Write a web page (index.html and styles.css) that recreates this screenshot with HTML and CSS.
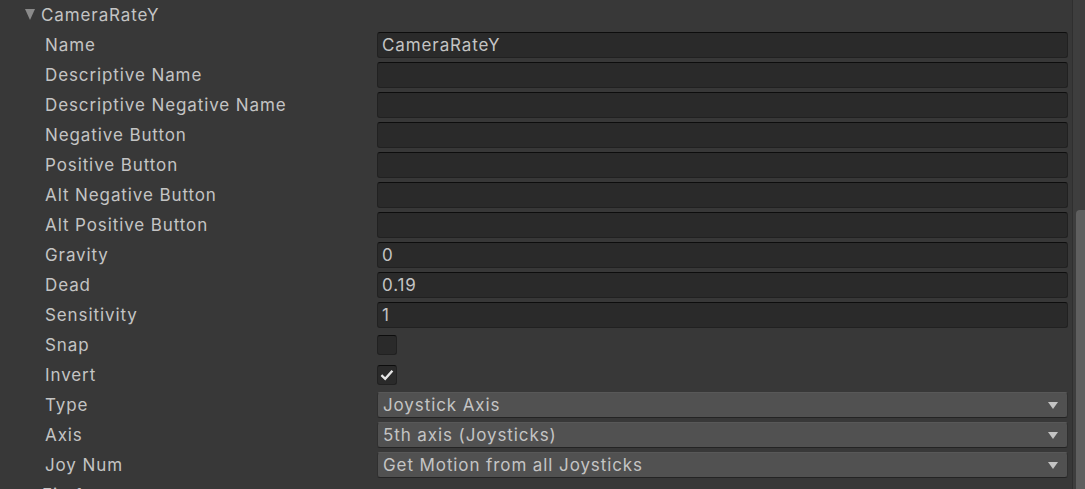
FILE: index.html
```html
<!DOCTYPE html>
<html>
<head>
<meta charset="utf-8">
<link rel="stylesheet" href="styles.css">
</head>
<body>
<div class="panel">
  <div class="content">
    <div class="header"><span class="tri-down"></span><span class="title">CameraRateY</span></div>
    <div class="row"><div class="label">Name</div><div class="field text">CameraRateY</div></div>
    <div class="row"><div class="label">Descriptive Name</div><div class="field text"></div></div>
    <div class="row"><div class="label">Descriptive Negative Name</div><div class="field text"></div></div>
    <div class="row"><div class="label">Negative Button</div><div class="field text"></div></div>
    <div class="row"><div class="label">Positive Button</div><div class="field text"></div></div>
    <div class="row"><div class="label">Alt Negative Button</div><div class="field text"></div></div>
    <div class="row"><div class="label">Alt Positive Button</div><div class="field text"></div></div>
    <div class="row"><div class="label">Gravity</div><div class="field text">0</div></div>
    <div class="row"><div class="label">Dead</div><div class="field text">0.19</div></div>
    <div class="row"><div class="label">Sensitivity</div><div class="field text">1</div></div>
    <div class="row"><div class="label">Snap</div><div class="check"></div></div>
    <div class="row"><div class="label">Invert</div><div class="check"><svg width="16" height="16" viewBox="0 0 16 16"><path d="M2.4 8.2 L6.2 11.8 L13.4 3.8" fill="none" stroke="#e6e6e6" stroke-width="2.4"/></svg></div></div>
    <div class="row"><div class="label">Type</div><div class="field drop"><span>Joystick Axis</span><span class="arrow"></span></div></div>
    <div class="row"><div class="label">Axis</div><div class="field drop"><span>5th axis (Joysticks)</span><span class="arrow"></span></div></div>
    <div class="row"><div class="label">Joy Num</div><div class="field drop"><span>Get Motion from all Joysticks</span><span class="arrow"></span></div></div>
    <div class="header next"><span class="tri-right"></span><span class="title">Fire1</span></div>
  </div>
  <div class="scroll"><div class="thumb"></div></div>
</div>
</body>
</html>
```
FILE: styles.css
```css
html, body {
  margin: 0;
  padding: 0;
  background: #383838;
  overflow: hidden;
}
.panel {
  display: flex;
  width: 1085px;
  height: 489px;
  overflow: hidden;
  font-family: Inter, "Noto Sans", sans-serif;
  font-size: 17px;
  letter-spacing: 0.9px;
  color: #c4c4c4;
}
.content {
  flex: 1;
  padding-right: 4px;
}
.header {
  height: 30px;
  display: flex;
  align-items: center;
  padding-left: 25px;
}
.tri-down {
  width: 0;
  height: 0;
  border-left: 5.5px solid transparent;
  border-right: 5.5px solid transparent;
  border-top: 11px solid #8a8a8a;
  margin-right: 6px;
  margin-top: -1px;
}
.tri-right {
  width: 0;
  height: 0;
  border-top: 5.5px solid transparent;
  border-bottom: 5.5px solid transparent;
  border-left: 8px solid #8a8a8a;
  margin-right: 9px;
}
.title {
  line-height: 30px;
}
.row {
  height: 30px;
  display: flex;
  align-items: center;
}
.label {
  width: 332px;
  padding-left: 45px;
  flex: none;
}
.field {
  flex: 1;
  height: 26px;
  box-sizing: border-box;
  border-radius: 3px;
  display: flex;
  align-items: center;
}
.text {
  background: #2a2a2a;
  border: 1px solid #212121;
  border-top-color: #0d0d0d;
  padding-left: 4px;
}
.drop {
  background: #515151;
  border: 1px solid #303030;
  border-top-color: #585858;
  border-bottom-color: #242424;
  padding-left: 5px;
  justify-content: space-between;
  padding-right: 9px;
}
.arrow {
  width: 0;
  height: 0;
  border-left: 5.5px solid transparent;
  border-right: 5.5px solid transparent;
  border-top: 7px solid #c4c4c4;
}
.check {
  width: 20px;
  height: 20px;
  box-sizing: border-box;
  background: #2a2a2a;
  border: 1px solid #212121;
  border-top-color: #0d0d0d;
  border-radius: 3px;
  display: flex;
  align-items: center;
  justify-content: center;
}
.check svg {
  display: block;
}
.scroll {
  width: 12px;
  flex: none;
  background: #3e3e3e;
  border-left: 1px solid #2f2f2f;
  position: relative;
}
.thumb {
  position: absolute;
  left: 3px;
  right: 0;
  top: 210px;
  bottom: 0;
  background: #5f5f5f;
  border-radius: 4px 0 0 0;
}
```
